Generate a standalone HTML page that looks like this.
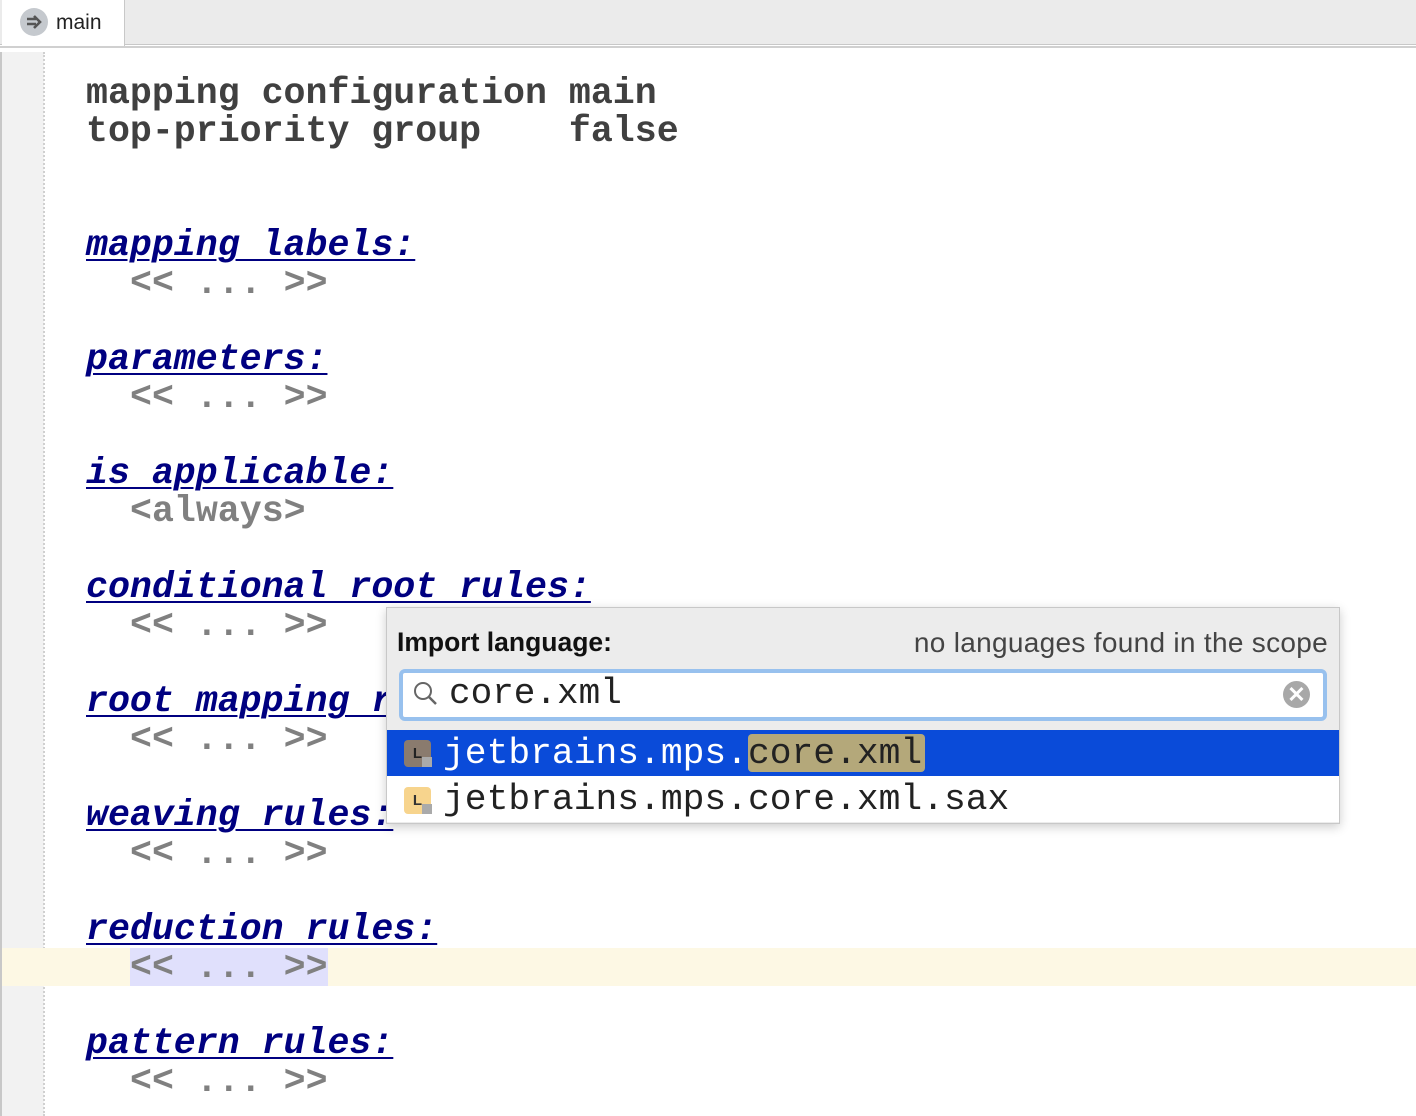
<!DOCTYPE html>
<html><head><style>
body{margin:0;width:1416px;height:1116px;background:#fff;position:relative;overflow:hidden;font-family:"Liberation Mono",monospace}
.abs{position:absolute}
.ln{position:absolute;font-size:36.6px;font-weight:bold;line-height:38px;white-space:pre;color:#404040}
.h{color:#000080;font-style:italic;text-decoration:underline;text-decoration-thickness:2px;text-underline-offset:4px}
.g{color:#808080}
</style></head><body>
<div class="abs" style="left:0;top:0;width:1416px;height:44px;background:#ebebeb;border-bottom:1px solid #c8c8c8"></div>
<div class="abs" style="left:2px;top:0;width:122px;height:46px;background:#fff;border-right:1px solid #c8c8c8"></div>
<div class="abs" style="left:20px;top:8px;width:28px;height:28px;border-radius:50%;background:#c5c9ce"></div>
<svg class="abs" style="left:20px;top:8px" width="28" height="28"><path d="M7 11h9M7 16h9M14 8l6 6-6 6" stroke="#555" stroke-width="2.6" fill="none"/></svg>
<div class="abs" style="left:56px;top:11px;font:21px 'Liberation Sans',sans-serif;color:#222">main</div>
<div class="abs" style="left:0;top:46px;width:1416px;height:6px;background:#fff;border-top:2px solid #d0d0d0"></div>
<div class="abs" style="left:0;top:52px;width:2px;height:1064px;background:#c8c8c8"></div>
<div class="abs" style="left:2px;top:52px;width:42px;height:1064px;background:#f2f2f2"></div>
<div class="abs" style="left:43px;top:52px;width:0;height:1064px;border-left:2px dotted #d0d0d0"></div>
<div class="abs" style="left:2px;top:948px;width:1414px;height:38px;background:#fdf8e4"></div>
<div class="abs" style="left:130px;top:948px;width:198px;height:38px;background:#e0e0fc"></div>

<div class="ln" style="left:86px;top:75px">mapping configuration main</div>
<div class="ln" style="left:86px;top:113px">top-priority group    false</div>
<div class="ln h" style="left:86px;top:227px">mapping labels:</div>
<div class="ln g" style="left:130px;top:265px">&lt;&lt; ... &gt;&gt;</div>
<div class="ln h" style="left:86px;top:341px">parameters:</div>
<div class="ln g" style="left:130px;top:379px">&lt;&lt; ... &gt;&gt;</div>
<div class="ln h" style="left:86px;top:455px">is applicable:</div>
<div class="ln g" style="left:130px;top:493px">&lt;always&gt;</div>
<div class="ln h" style="left:86px;top:569px">conditional root rules:</div>
<div class="ln g" style="left:130px;top:607px">&lt;&lt; ... &gt;&gt;</div>
<div class="ln h" style="left:86px;top:683px">root mapping rules:</div>
<div class="ln g" style="left:130px;top:721px">&lt;&lt; ... &gt;&gt;</div>
<div class="ln h" style="left:86px;top:797px">weaving rules:</div>
<div class="ln g" style="left:130px;top:835px">&lt;&lt; ... &gt;&gt;</div>
<div class="ln h" style="left:86px;top:911px">reduction rules:</div>
<div class="ln g" style="left:130px;top:949px">&lt;&lt; ... &gt;&gt;</div>
<div class="ln h" style="left:86px;top:1025px">pattern rules:</div>
<div class="ln g" style="left:130px;top:1063px">&lt;&lt; ... &gt;&gt;</div>

<div class="abs" style="left:386px;top:607px;width:952px;height:215px;background:#ececec;border:1px solid #c8c8c8;box-shadow:0 3px 10px rgba(0,0,0,.2)">
 <div class="abs" style="left:10px;top:19px;font:bold 26.5px 'Liberation Sans',sans-serif;color:#111">Import language:</div>
 <div class="abs" style="right:11px;top:19px;font:28px 'Liberation Sans',sans-serif;color:#444;letter-spacing:0.3px">no languages found in the scope</div>
 <div class="abs" style="left:12px;top:61px;width:920px;height:44px;background:#fff;border:4px solid #98c1ee;border-radius:6px"></div>
 <svg class="abs" style="left:25px;top:72px" width="28" height="28"><circle cx="11" cy="11" r="8" stroke="#666" stroke-width="2" fill="none"/><path d="M17 17l7 7" stroke="#666" stroke-width="2.5"/></svg>
 <div class="abs" style="left:62px;top:67px;font-size:36px;line-height:38px;color:#222;white-space:pre">core.xml</div>
 <div class="abs" style="left:896px;top:73px;width:27px;height:27px;border-radius:50%;background:#a8a8a8;color:#fff;font:bold 22px/27px 'Liberation Sans',sans-serif;text-align:center">✕</div>
 <div class="abs" style="left:0;top:122px;width:952px;height:46px;background:#0a4bd9"></div>
 <div class="abs" style="left:0;top:168px;width:952px;height:46px;background:#fff"></div>
 <div class="abs" style="left:17px;top:132px;width:27px;height:27px;border-radius:4px;background:#8a7b6e;color:#222;font:bold 15px/27px 'Liberation Sans',sans-serif;text-align:center">L</div>
 <div class="abs" style="left:35px;top:149px;width:10px;height:10px;background:#aaa"></div>
 <div class="abs" style="left:17px;top:179px;width:27px;height:27px;border-radius:4px;background:#f7d48d;color:#333;font:bold 15px/27px 'Liberation Sans',sans-serif;text-align:center">L</div>
 <div class="abs" style="left:35px;top:196px;width:10px;height:10px;background:#aaa"></div>
 <div class="abs" style="left:361px;top:126px;width:177px;height:38px;border-radius:4px;background:#b4a87a"></div>
 <div class="abs" style="left:56px;top:127px;font-size:36.3px;line-height:38px;color:#fff;white-space:pre">jetbrains.mps.<span style="color:#222">core.xml</span></div>
 <div class="abs" style="left:56px;top:173px;font-size:36.3px;line-height:38px;color:#222;white-space:pre">jetbrains.mps.core.xml.sax</div>
</div>
</body></html>
